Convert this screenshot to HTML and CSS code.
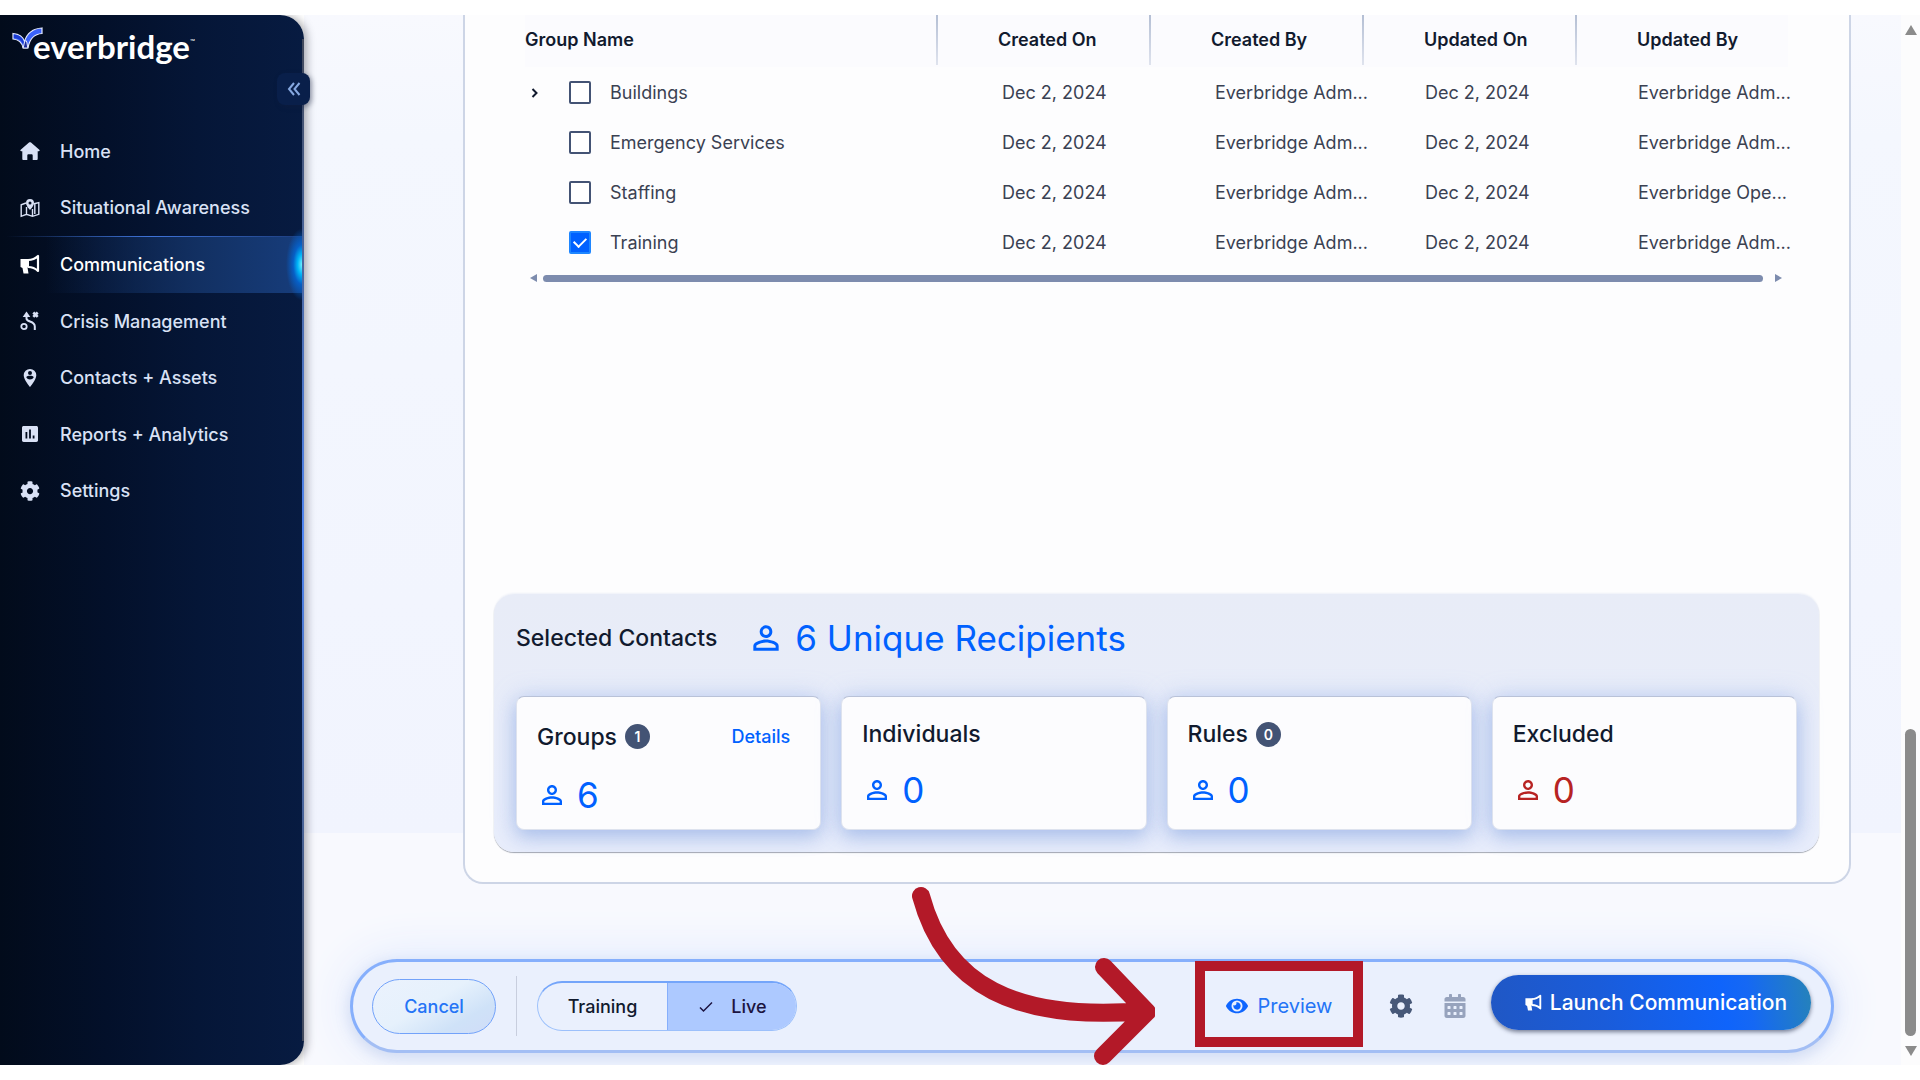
FILE: index.html
```html
<!DOCTYPE html>
<html lang="en">
<head>
<meta charset="utf-8">
<title>Everbridge – Communications</title>
<link rel="stylesheet" href="styles.css">
</head>
<body>
<svg class="sprite" aria-hidden="true">
  <symbol id="i-person" viewBox="0 0 24 24"><path d="M12 5.9c1.16 0 2.1.94 2.1 2.1s-.94 2.1-2.1 2.1S9.9 9.16 9.9 8s.94-2.1 2.1-2.1m0 9c2.97 0 6.1 1.46 6.1 2.1v1.1H5.9V17c0-.64 3.13-2.1 6.1-2.1M12 4C9.79 4 8 5.79 8 8s1.79 4 4 4 4-1.79 4-4-1.79-4-4-4zm0 9c-2.67 0-8 1.34-8 4v3h16v-3c0-2.66-5.33-4-8-4z"/></symbol>
  <symbol id="i-cog" viewBox="0 0 512 512"><path d="M487.4 315.7l-42.6-24.6c4.3-23.2 4.3-47 0-70.2l42.6-24.6c4.9-2.8 7.1-8.6 5.5-14-11.1-35.6-30-67.8-54.7-94.6-3.8-4.1-10-5.1-14.8-2.3L380.8 110c-17.9-15.4-38.5-27.3-60.8-35.1V25.8c0-5.6-3.9-10.5-9.4-11.7-36.7-8.2-74.3-7.8-109.2 0-5.5 1.2-9.4 6.1-9.4 11.7V75c-22.2 7.9-42.8 19.8-60.8 35.1L88.7 85.5c-4.9-2.8-11-1.9-14.8 2.3-24.7 26.7-43.6 58.9-54.7 94.6-1.7 5.4.6 11.2 5.5 14L67.3 221c-4.3 23.2-4.3 47 0 70.2l-42.6 24.6c-4.9 2.8-7.1 8.6-5.5 14 11.1 35.6 30 67.8 54.7 94.6 3.8 4.1 10 5.1 14.8 2.3l42.6-24.6c17.9 15.4 38.5 27.3 60.8 35.1v49.2c0 5.6 3.9 10.5 9.4 11.7 36.7 8.2 74.3 7.8 109.2 0 5.5-1.2 9.4-6.1 9.4-11.7v-49.2c22.2-7.9 42.8-19.8 60.8-35.1l42.6 24.6c4.9 2.8 11 1.9 14.8-2.3 24.7-26.7 43.6-58.9 54.7-94.6 1.5-5.5-.7-11.3-5.6-14.1zM256 336c-44.1 0-80-35.9-80-80s35.9-80 80-80 80 35.9 80 80-35.9 80-80 80z"/></symbol>
  <symbol id="i-horn" viewBox="0 0 20 20"><path d="M.5 5H9v8.500H7.500l1 6h-5l-1-5.500L.5 13z"/><path d="M8 6c4 0 7.500-1.500 10-4v15c-2.500-2.500-6-4-10-4" fill="none" stroke="currentColor" stroke-width="2.200" stroke-linejoin="round"/></symbol>
</svg>

<div class="app">
  <aside class="sidebar">
    <a class="logo" href="#" aria-label="everbridge">
      <svg class="logo-mark" viewBox="0 0 32 24"><path d="M1 6.500c6 .5 10 3 11.500 8C15 6 21 1.500 30 1v5.500C22 7 17.500 12 16 21h-5C10 15 7 12.500 1 12z" fill="#3a62fa" stroke="#e6ebff" stroke-width="1.200"/><path d="M1.800 7.500c5 .3 9 3 10.200 8l-.5 3C10 13.500 7 11.500 1.800 11z" fill="#1b3bd0"/><path d="M12.500 15l-1.300 6h4.600l-1-6-1-1.500z" fill="#1b2b9c" stroke="#e6ebff" stroke-width="1"/></svg>
      <span class="logo-word">everbridge</span><span class="logo-tm">™</span>
    </a>
    <button class="collapse" aria-label="Collapse menu"><svg viewBox="0 0 14 14"><path d="M7 1L2 7l5 6M12.500 1l-5 6 5 6"/></svg></button>
    <nav>
      <ul class="menu">
        <li><a href="#"><svg viewBox="0 0 20 20"><path d="M10 1.200c.4 0 .7.100 1 .4l8.300 7.200c.7.600.3 1.500-.5 1.500h-1.100v7.500c0 .8-.4 1.200-1.200 1.200h-3.800v-4.500c0-.8-.5-1.300-1.300-1.300H8.600c-.8 0-1.300.5-1.300 1.300V19H3.500c-.8 0-1.200-.4-1.200-1.200v-7.500H1.200c-.8 0-1.200-.9-.5-1.500L9 1.600c.3-.3.600-.4 1-.4z"/></svg>Home</a></li>
        <li><a href="#"><svg viewBox="0 0 20 20"><path d="M6 5L1.200 6.800v11.500l5.300-2 6 2 6.300-2V4.600L14 5.800M6.500 9v7.300M12.500 11v7.300M14.800 6v10" fill="none" stroke="currentColor" stroke-width="1.400"/><path d="M10 1a4 4 0 0 0-4 4c0 3 4 7 4 7s4-4 4-7a4 4 0 0 0-4-4zm0 2.500a1.500 1.500 0 1 1 0 3 1.500 1.500 0 0 1 0-3z" fill-rule="evenodd"/></svg>Situational Awareness</a></li>
        <li><a class="active" href="#" aria-current="page"><svg><use href="#i-horn"/></svg>Communications</a></li>
        <li><a href="#"><svg viewBox="0 0 20 20"><circle cx="4" cy="15.500" r="2.700" fill="none" stroke="currentColor" stroke-width="1.800"/><path d="M6.500 6v1.500c0 4 8.300 2 8.300 8V19" fill="none" stroke="currentColor" stroke-width="2"/><path d="M6.500.5L10.300 6H2.700z"/><path d="M13.300 1.500l4.400 4.400m0-4.400l-4.400 4.400" stroke="currentColor" stroke-width="2.600"/></svg>Crisis Management</a></li>
        <li><a href="#"><svg viewBox="0 0 20 20"><path d="M10 1a6.300 6.300 0 0 0-6.300 6.300C3.700 12 10 19 10 19s6.300-7 6.300-11.700A6.300 6.300 0 0 0 10 1zm0 2a2 2 0 1 1 0 4 2 2 0 0 1 0-4zm0 8.500A4.300 4.300 0 0 1 6.300 9.400C6.400 8.200 8.800 7.800 10 7.800s3.600.4 3.700 1.600A4.300 4.300 0 0 1 10 11.500z" fill-rule="evenodd"/></svg>Contacts + Assets</a></li>
        <li><a href="#"><svg viewBox="0 0 20 20"><path d="M3.700 2h12.600c1 0 1.700.7 1.700 1.700v12.600c0 1-.7 1.700-1.700 1.700H3.700c-1 0-1.700-.7-1.700-1.700V3.700C2 2.700 2.700 2 3.700 2zM5.500 8v6.500h1.800V8zm3.600-2.500v9h1.800v-9zm3.600 6v3h1.800v-3z" fill-rule="evenodd"/></svg>Reports + Analytics</a></li>
        <li><a href="#"><svg><use href="#i-cog"/></svg>Settings</a></li>
      </ul>
    </nav>
  </aside>

  <main class="content">
    <section class="card">
      <table class="groups">
        <colgroup><col><col class="meta"><col class="meta"><col class="meta"><col class="meta"></colgroup>
        <thead>
          <tr><th>Group Name</th><th>Created On</th><th>Created By</th><th>Updated On</th><th>Updated By</th></tr>
        </thead>
        <tbody>
          <tr><td><div class="name"><button class="expand" aria-label="Expand Buildings"><svg viewBox="0 0 8 12"><path d="M1.500 2l4 4-4 4"/></svg></button><label><input type="checkbox">Buildings</label></div></td><td>Dec 2, 2024</td><td>Everbridge Adm...</td><td>Dec 2, 2024</td><td>Everbridge Adm...</td></tr>
          <tr><td><div class="name"><label><input type="checkbox">Emergency Services</label></div></td><td>Dec 2, 2024</td><td>Everbridge Adm...</td><td>Dec 2, 2024</td><td>Everbridge Adm...</td></tr>
          <tr><td><div class="name"><label><input type="checkbox">Staffing</label></div></td><td>Dec 2, 2024</td><td>Everbridge Adm...</td><td>Dec 2, 2024</td><td>Everbridge Ope...</td></tr>
          <tr><td><div class="name"><label><input type="checkbox" checked>Training</label></div></td><td>Dec 2, 2024</td><td>Everbridge Adm...</td><td>Dec 2, 2024</td><td>Everbridge Adm...</td></tr>
        </tbody>
      </table>
      <div class="hscroll"><i class="tri left"></i><span class="hthumb"></span><i class="tri right"></i></div>

      <section class="selected">
        <header>
          <h2>Selected Contacts</h2>
          <p class="total"><svg><use href="#i-person"/></svg>6 Unique Recipients</p>
        </header>
        <div class="tiles">
          <article class="tile">
            <div class="tile-head tall"><h3>Groups</h3><span class="badge">1</span><a href="#">Details</a></div>
            <p class="count"><svg><use href="#i-person"/></svg>6</p>
          </article>
          <article class="tile">
            <div class="tile-head"><h3>Individuals</h3></div>
            <p class="count"><svg><use href="#i-person"/></svg>0</p>
          </article>
          <article class="tile">
            <div class="tile-head"><h3>Rules</h3><span class="badge">0</span></div>
            <p class="count"><svg><use href="#i-person"/></svg>0</p>
          </article>
          <article class="tile">
            <div class="tile-head"><h3>Excluded</h3></div>
            <p class="count excluded"><svg><use href="#i-person"/></svg>0</p>
          </article>
        </div>
      </section>
    </section>

    <footer class="actions">
      <button class="cancel">Cancel</button>
      <span class="rule"></span>
      <div class="mode" role="radiogroup" aria-label="Mode">
        <label><input type="radio" name="mode">Training</label>
        <label class="on"><input type="radio" name="mode" checked><svg viewBox="0 0 14 12"><path d="M1 6.500l3.500 3.500L13 1.500"/></svg>Live</label>
      </div>
      <button class="preview"><svg viewBox="0 0 576 512"><path d="M572.52 241.4C518.29 135.59 410.93 64 288 64S57.68 135.64 3.480 241.410a32.350 32.350 0 0 0 0 29.190C57.710 376.410 165.070 448 288 448s230.320-71.640 284.520-177.410a32.350 32.350 0 0 0 0-29.190zM288 400a144 144 0 1 1 144-144 143.930 143.930 0 0 1-144 144zm0-240a95.310 95.310 0 0 0-25.310 3.790 47.850 47.850 0 0 1-66.900 66.900A95.780 95.780 0 1 0 288 160z"/></svg>Preview</button>
      <button class="icon-btn" aria-label="Options"><svg><use href="#i-cog"/></svg></button>
      <button class="icon-btn muted" aria-label="Schedule"><svg viewBox="0 0 448 512"><path d="M0 464c0 26.500 21.500 48 48 48h352c26.500 0 48-21.500 48-48V192H0v272zm320-196c0-6.600 5.400-12 12-12h40c6.600 0 12 5.400 12 12v40c0 6.600-5.400 12-12 12h-40c-6.600 0-12-5.400-12-12v-40zm0 128c0-6.600 5.400-12 12-12h40c6.600 0 12 5.400 12 12v40c0 6.600-5.400 12-12 12h-40c-6.600 0-12-5.400-12-12v-40zM192 268c0-6.600 5.400-12 12-12h40c6.600 0 12 5.400 12 12v40c0 6.600-5.400 12-12 12h-40c-6.600 0-12-5.400-12-12v-40zm0 128c0-6.600 5.400-12 12-12h40c6.600 0 12 5.400 12 12v40c0 6.600-5.400 12-12 12h-40c-6.600 0-12-5.400-12-12v-40zM64 268c0-6.600 5.400-12 12-12h40c6.600 0 12 5.400 12 12v40c0 6.600-5.400 12-12 12H76c-6.600 0-12-5.400-12-12v-40zm0 128c0-6.600 5.400-12 12-12h40c6.600 0 12 5.400 12 12v40c0 6.600-5.400 12-12 12H76c-6.600 0-12-5.400-12-12v-40zM400 64h-48V16c0-8.800-7.200-16-16-16h-32c-8.800 0-16 7.200-16 16v48H160V16c0-8.800-7.200-16-16-16h-32c-8.800 0-16 7.200-16 16v48H48C21.500 64 0 85.500 0 112v48h448v-48c0-26.500-21.500-48-48-48z"/></svg></button>
      <button class="launch"><svg><use href="#i-horn"/></svg>Launch Communication</button>
      <svg class="pointer" viewBox="0 0 250 190" aria-hidden="true"><path d="M16 16C40 105 110 142 240 131M199 87l43 45-44 44"/></svg>
    </footer>
  </main>

  <div class="vscroll"><i class="tri up"></i><span class="vthumb"></span><i class="tri down"></i></div>
</div>
</body>
</html>
```
FILE: styles.css
```css
* { box-sizing: border-box; }
body {
  margin: 0;
  padding: 15px 0;
  min-height: 100vh;
  display: flex;
  background: #fff;
  font-family: Inter, "Liberation Sans", sans-serif;
  font-size: 18px;
  color: #111a2e;
}
h2, h3, p, ul { margin: 0; padding: 0; }
button, input { font: inherit; color: inherit; }
button { border: 0; padding: 0; background: none; cursor: pointer; }
a { text-decoration: none; color: inherit; }
svg { display: block; flex: none; fill: currentColor; }
.sprite { position: absolute; width: 0; height: 0; }

.app { flex: 1; display: flex; min-width: 0; }

/* Side navigation */
.sidebar {
  position: relative;
  z-index: 2;
  flex: none;
  width: 304px;
  border-radius: 0 24px 24px 0;
  background: linear-gradient(90deg, #020b1b 0%, #03102a 35%, #051637 65%, #071b41 100%);
  box-shadow: 3px 0 9px rgba(50, 50, 60, .4);
  clip-path: inset(0 -40px 0 0);
  color: #d9e1f5;
}
/* Highlight running down the outer edge, brightest in the middle */
.sidebar::after {
  content: "";
  position: absolute;
  right: 0;
  top: 24px;
  bottom: 24px;
  width: 2px;
  background: linear-gradient(180deg, #41485a, #4a6aa8 25%, #5087f5 50%, #4a6aa8 72%, #41485a);
}
.logo { display: flex; align-items: flex-start; padding: 12px 0 0 12px; height: 60px; color: #fff; }
.logo-mark { width: 32px; height: 24px; }
.logo-word { margin: 0 0 0 -11px; font: 700 33px/39px Lato, sans-serif; }
.logo-tm { font-size: 8px; line-height: 30px; }
.collapse {
  position: absolute;
  z-index: 1;
  right: -6px;
  top: 58px;
  width: 33px;
  height: 32px;
  display: grid;
  place-items: center;
  border-radius: 8px;
  background: #091f4a;
  box-shadow: 2px 2px 5px rgba(20, 30, 60, .4);
  color: #86a8e0;
}
.collapse svg { width: 14px; height: 14px; fill: none; stroke: currentColor; stroke-width: 2; }
.menu { margin-top: 48px; height: 396px; display: flex; flex-direction: column; list-style: none; }
.menu li { flex: 1; display: flex; }
.menu a {
  position: relative;
  flex: 1;
  display: flex;
  align-items: center;
  gap: 20px;
  padding-left: 20px;
  font-weight: 500;
}
.menu svg { width: 20px; height: 20px; }
.menu a.active {
  color: #fff;
  background:
    linear-gradient(90deg, transparent 2%, #3f73d8 50%, #1c3d7e 100%) top / 100% 1px no-repeat,
    linear-gradient(90deg, transparent 15%, #123062 65%, #173d7c 100%);
}
.menu a.active::after {
  content: "";
  position: absolute;
  right: 2px;
  top: -8px;
  bottom: -8px;
  width: 16px;
  background: radial-gradient(16px 36px at 100% 50%, #6ff0ff 0%, #00b4f8 28%, rgba(0, 110, 230, .7) 55%, transparent 100%);
}

/* Main column */
.content {
  flex: 1;
  min-width: 0;
  overflow: hidden;
  padding: 0 67px 12px 46px;
  display: flex;
  flex-direction: column;
  background:
    linear-gradient(180deg, #f8f9fe 0, #f4f7fe 120px, #f1f4fe 818px) top / 100% 818px no-repeat,
    #f8f9fe;
}
.card {
  margin: 0 -17px 75px 113px;
  padding: 0 30px 30px 29px;
  border: 2px solid #cdd5e6;
  border-top: 0;
  border-radius: 0 0 20px 20px;
  background: #fdfdfe;
}
.groups { width: calc(100% - 62px); margin-left: 31px; border-collapse: collapse; table-layout: fixed; }
.groups .meta { width: 213px; }
.groups th {
  height: 52px;
  padding: 0 0 3px;
  text-align: left;
  font-weight: 600;
  background: #fbfbfe;
}
.groups th + th {
  padding-left: 62px;
  background: linear-gradient(180deg, #b4bfd4, #dfe3ee) left top / 2px 50px no-repeat, #fbfbfe;
}
.groups td { height: 50px; padding: 0 0 0 66px; white-space: nowrap; color: #3a4152; }
.groups td:nth-child(4), .groups td:nth-child(5) { padding-left: 63px; }
.groups td:first-child { padding: 0; }
.name { position: relative; padding-left: 44px; }
.name label { display: flex; align-items: center; gap: 19px; }
.expand { position: absolute; left: 4px; top: 4px; width: 12px; height: 16px; display: grid; place-items: center; }
.expand svg { width: 8px; height: 12px; fill: none; stroke: #111a2e; stroke-width: 2; }
.name input {
  appearance: none;
  flex: none;
  display: grid;
  place-items: center;
  width: 22px;
  height: 23px;
  margin: 0;
  border: 2px solid #435374;
  border-radius: 2px;
  background: #fff;
}
.name input:checked { background: #0061ff; border-color: #1e86ff; }
.name input:checked::before {
  content: "";
  width: 6px;
  height: 10px;
  margin-bottom: 3px;
  border: solid #fff;
  border-width: 0 2px 2px 0;
  transform: rotate(45deg);
}
.hscroll { display: flex; align-items: center; height: 8px; margin: 7px 37px 312px 36px; }
.hthumb { flex: 1; height: 7px; margin: 0 12px 0 6px; border-radius: 4px; background: #7d8cae; }
.tri { border: 4px solid transparent; }
.tri.left { border-width: 4px 7px 4px 0; border-right-color: #7d8cae; }
.tri.right { border-width: 4px 0 4px 7px; border-left-color: #7d8cae; }

/* Selected contacts summary */
.selected {
  padding: 22px;
  border-radius: 20px;
  background: linear-gradient(180deg, #e8ecf7, #e8edfb);
  box-shadow: 0 1px 1px #a3a8b2, 0 -1px 2px #eef1f8;
}
.selected header { display: flex; align-items: center; gap: 30px; height: 44px; margin-bottom: 36px; }
.selected h2 { font-size: 23px; font-weight: 500; }
.total { display: flex; align-items: center; gap: 10px; font-size: 35px; line-height: 44px; color: #0061ff; }
.total svg { width: 38px; height: 38px; }
.tiles { display: grid; grid-template-columns: repeat(4, 1fr); gap: 20px; }
.tile {
  height: 134px;
  padding: 20px 30px 0 20px;
  border: 1px solid #dde2ee;
  border-top-color: #b9c2d8;
  border-radius: 8px;
  background: #fcfcfe;
  box-shadow: 0 8px 18px rgba(90, 130, 210, .32), 0 0 24px rgba(150, 180, 240, .4);
}
.tile-head { display: flex; align-items: center; gap: 8px; height: 34px; }
.tile-head.tall { height: 39px; }
.tile-head a { margin-left: auto; font-weight: 500; color: #0061ff; }
.tile h3 { font-size: 23px; font-weight: 500; }
.badge {
  width: 25px;
  height: 25px;
  display: grid;
  place-items: center;
  border-radius: 50%;
  background: #435374;
  color: #fff;
  font-size: 14px;
  font-weight: 600;
}
.count { display: flex; align-items: center; gap: 10px; margin-top: 18px; line-height: 42px; font-size: 35px; color: #0061ff; }
.count svg { width: 30px; height: 30px; }
.count.excluded { color: #b72323; }

/* Action bar */
.actions {
  position: relative;
  display: flex;
  align-items: center;
  height: 94px;
  padding: 0 20px 0 19px;
  border: 3px solid #86affc;
  border-bottom-color: #a3bef4;
  border-radius: 47px;
  background: #eaf0fd;
  box-shadow: 0 0 50px #dbe7fe, 0 4px 14px rgba(130, 150, 200, .4);
}
.cancel {
  width: 124px;
  height: 55px;
  border: 1px solid #72a2fa;
  border-radius: 28px;
  background: linear-gradient(150deg, #ebf2fd 0%, #e6f1fc 45%, #cfe2f8 75%, #d0dcf8 100%);
  font-weight: 500;
  color: #2474f6;
}
.rule { width: 1px; height: 60px; margin: 0 20px; background: #c8cede; }
.mode { display: flex; height: 50px; border: 1px solid #9cc0fb; border-top: 2px solid #74a5fa; border-radius: 25px; overflow: hidden; font-weight: 500; }
.mode label { display: flex; align-items: center; justify-content: center; width: 129px; }
.mode .on { gap: 18px; padding-left: 2px; border-left: 1px solid #86affc; background: #adc9ff; color: #1c1440; }
.mode input { position: absolute; opacity: 0; width: 1px; height: 1px; margin: 0; }
.mode svg { width: 14px; height: 12px; fill: none; stroke: currentColor; stroke-width: 1.5; }
.preview {
  margin: 0 0 4px auto;
  padding-top: 4px;
  width: 168px;
  height: 86px;
  display: flex;
  align-items: center;
  justify-content: center;
  gap: 10px;
  border: 10px solid #b31928;
  font-size: 20px;
  color: #2474f6;
}
.preview svg { width: 22px; height: 20px; color: #0f66ff; }
.icon-btn { width: 24px; margin-left: 26px; color: #475878; display: grid; place-items: center; }
.icon-btn svg { width: 24px; height: 24px; }
.icon-btn.muted { margin-left: 30px; color: #97a3bd; }
.launch {
  width: 320px;
  height: 55px;
  margin: 0 0 8px 24px;
  padding-left: 10px;
  display: flex;
  align-items: center;
  justify-content: center;
  gap: 8px;
  border-radius: 28px;
  background: linear-gradient(80deg, #2057c4 0%, #1a5cda 35%, #0f64fb 72%, #1568f4 80%, #2683b8 100%);
  box-shadow: 0 2px 4px rgba(20, 30, 60, .55);
  font-size: 21px;
  font-weight: 500;
  color: #fff;
}
.launch svg { width: 17px; height: 17px; }
.pointer { position: absolute; right: 676px; top: -82px; width: 250px; height: 190px; fill: none; stroke: #b31928; stroke-width: 18; stroke-linecap: round; stroke-linejoin: round; pointer-events: none; }

/* Page scroll indicator */
.vscroll { flex: none; width: 19px; padding: 10px 0 9px; display: flex; flex-direction: column; align-items: center; background: #fcfcfd; }
.vthumb { width: 11px; height: 307px; margin-top: auto; border-radius: 6px; background: #8b8b8b; }
.tri.up { border-width: 0 6px 10px; border-bottom-color: #8b8b8b; }
.tri.down { margin-top: 10px; border-width: 10px 6px 0; border-top-color: #8b8b8b; }
```
